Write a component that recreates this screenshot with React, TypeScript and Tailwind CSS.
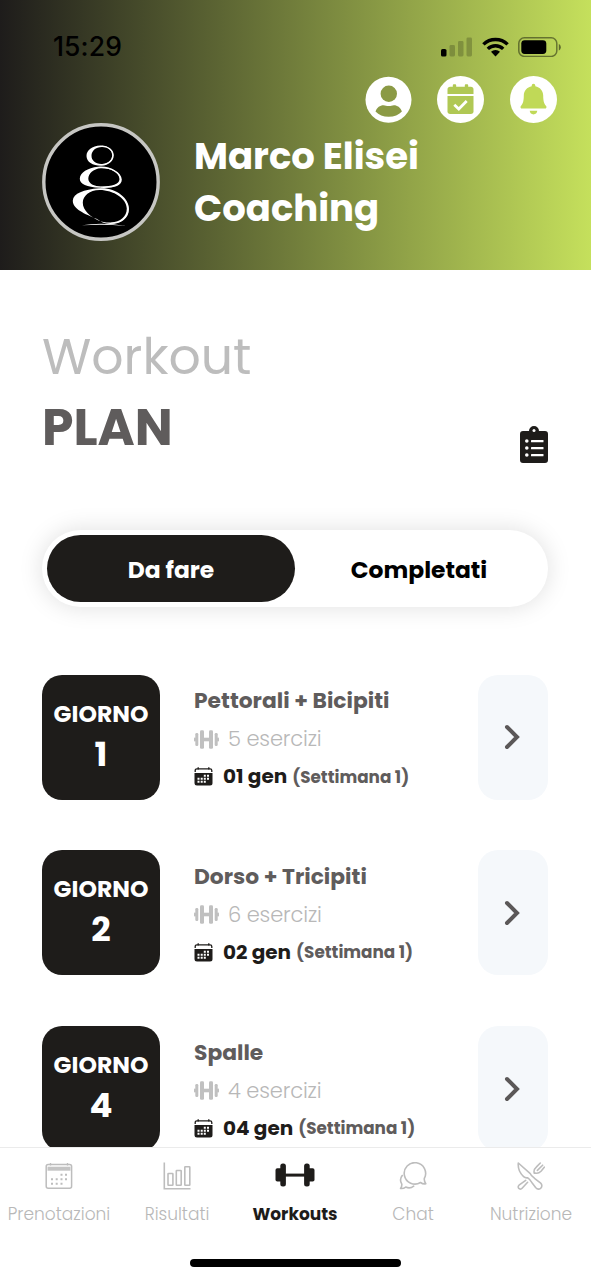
import { useState } from "react";

const workouts = [
  { day: 1, title: "Pettorali + Bicipiti", exercises: 5, date: "01 gen", week: "(Settimana 1)" },
  { day: 2, title: "Dorso + Tricipiti", exercises: 6, date: "02 gen", week: "(Settimana 1)" },
  { day: 4, title: "Spalle", exercises: 4, date: "04 gen", week: "(Settimana 1)" },
];

const navItems = [
  { label: "Prenotazioni", icon: CalendarOutlineIcon },
  { label: "Risultati", icon: ChartIcon },
  { label: "Workouts", icon: BarbellIcon },
  { label: "Chat", icon: ChatIcon },
  { label: "Nutrizione", icon: CutleryIcon },
];

function StatusBar() {
  return (
    <div className="flex h-[76px] items-center justify-between pt-[17px] pr-[30px] pl-[53px]">
      <span className="font-['Inter',sans-serif] text-[26.5px] font-medium tracking-[0.1px] text-black">15:29</span>
      <div className="flex items-center">
        <svg width="31" height="20" viewBox="0 0 31 20">
          <rect x="0" y="12" width="5.5" height="7.5" rx="1.6" fill="#000" />
          <g fill="#000" opacity="0.2">
            <rect x="8.5" y="8" width="5.5" height="11.5" rx="1.4" />
            <rect x="17" y="4" width="5.5" height="15.5" rx="1.4" />
            <rect x="25.5" y="0.5" width="5.5" height="19" rx="1.4" />
          </g>
        </svg>
        <svg className="ml-[10px]" width="27" height="20" viewBox="0 0 27 20">
          <g fill="none" stroke="#000" strokeWidth="3.4">
            <path d="M1.4 7.4A17.4 17.4 0 0 1 25.6 7.4" />
            <path d="M5.8 11.9A11.1 11.1 0 0 1 21.2 11.9" />
          </g>
          <path d="M9 14.8a6.6 6.6 0 0 1 9 0L13.5 19.6z" fill="#000" />
        </svg>
        <svg className="ml-[9px]" width="43" height="20" viewBox="0 0 43 20">
          <rect x="0.8" y="0.8" width="38" height="18.6" rx="5.5" fill="none" stroke="#000" strokeOpacity="0.45" strokeWidth="1.5" />
          <rect x="3.3" y="3.2" width="25" height="13.8" rx="3.4" fill="#000" />
          <path d="M40.8 7v6.4c1.2-.5 2-1.7 2-3.2s-.8-2.7-2-3.2z" fill="#000" opacity="0.5" />
        </svg>
      </div>
    </div>
  );
}

function HeaderIcons() {
  return (
    <div className="flex h-[47px] justify-end gap-[25.5px] pr-[34.5px]">
      <svg width="47" height="47" viewBox="0 0 47 47">
        <circle cx="23.5" cy="23.8" r="23" fill="#fff" />
        <circle cx="23.8" cy="17.8" r="8.2" fill="#8b9a45" />
        <path d="M10.5 35.5C12 31.5 15 29.3 18.5 29.3c2 0 2.8.8 5.2.8s3.2-.8 5.2-.8c3.500 0 6.500 2.200 8 6.200-3.300 3.400-7.700 5.300-13.200 5.300s-9.900-1.900-13.200-5.300z" fill="#8b9a45" />
      </svg>
      <svg width="47" height="47" viewBox="0 0 47 47">
        <circle cx="23.5" cy="23.5" r="23.5" fill="#fff" />
        <g fill="#b0c854">
          <path d="M10.5 18v-4.500c0-1.600 1-2.700 2.700-2.700h2.600V9.500c0-.8.5-1.300 1.200-1.300h1c.7 0 1.200.5 1.200 1.300v1.300h8.600V9.500c0-.8.5-1.300 1.200-1.300h1c.7 0 1.200.5 1.200 1.300v1.300h2.600c1.700 0 2.700 1.100 2.700 2.700V18z" />
          <path d="M10.5 19.900h26v15.300c0 1.700-1 2.800-2.700 2.800H13.200c-1.700 0-2.700-1.100-2.700-2.800z" />
        </g>
        <path d="M17.3 28.7l4.500 4.300 7.900-7.900" fill="none" stroke="#fff" strokeWidth="2.8" />
      </svg>
      <svg width="47" height="47" viewBox="0 0 47 47">
        <circle cx="23.5" cy="23.5" r="23.5" fill="#fff" />
        <g fill="#c0d957">
          <path d="M21.7 10.200V9.500a1.800 1.800 0 0 1 3.600 0v.7c4.600.9 7.900 4.600 7.900 9.300 0 6.500 1.300 8.600 2.900 10.400.9 1 .3 2.700-1.300 2.700H12.200c-1.600 0-2.200-1.700-1.300-2.700 1.600-1.800 2.900-3.900 2.900-10.400 0-4.700 3.300-8.400 7.900-9.300z" />
          <path d="M19.7 34.800h7.600c-.2 2.200-1.800 3.600-3.800 3.600s-3.600-1.400-3.800-3.600z" />
        </g>
      </svg>
    </div>
  );
}

function Logo() {
  return (
    <svg className="shrink-0" width="118" height="118" viewBox="0 0 118 118">
      <circle cx="59" cy="59" r="57.2" fill="#000" stroke="#c6c6c3" strokeWidth="3.4" />
      <path
        fillRule="evenodd"
        fill="#fff"
        d="M58.5 22.5C65.5 22 71.800 26.500 71.800 32C71.800 38 66.500 42.500 59.500 42.800C51 43 44.500 39 44.500 33C44.500 27 50 23 58.500 22.500ZM60 24C53.500 24 49.500 28 49.500 32.800C49.500 37.500 53.500 41.300 60 41C66.500 40.700 70.300 36.500 70.200 32C70.100 27.500 66 24 60 24ZM56 43.800C67 42.300 79.500 49 79.800 56.500C80 63 71 65.500 57.500 64.800C45 64 37.500 61.500 37.800 55.500C38.200 49.500 45.500 45 56 43.800ZM59 45.300C51 45.700 46.500 51 46.300 55.500C46.200 60.500 52 63.500 60 63.500C69.500 63.400 77.500 61.500 77.500 56C77.300 50 68.500 44.900 59 45.300ZM57 65.300C73 63.800 87 74.500 87 86C87 95 79 101 68.500 101C62 101 59 98.800 54.500 95.800C43 91 30.500 86 30.800 77.500C31.100 70.500 42 66.500 57 65.300ZM57.500 67C47.500 67 41 73 40.800 79.500C40.600 87.500 49 94 56.500 97.500C60.500 99.300 64.500 99.700 69 99.500C78.500 99 84.800 93.500 84.800 85.500C84.800 76 72 67 57.500 67Z"
      />
      <path
        fill="none"
        stroke="#fff"
        strokeWidth="0.8"
        d="M60 23.200a10.800 9.200 0 0 1 0 18.400M59 44.500c10 0 19.500 5 19.500 12s-9 7.700-19.500 7.700M58 66.200c15 0 28 9 28 19.500s-8 14.500-17 14.500"
      />
      <path d="M40 102.300Q60 98.800 84 103Q62 100.800 40 102.300Z" fill="#fff" />
    </svg>
  );
}

function ClipboardIcon() {
  return (
    <svg width="28" height="37" viewBox="0 0 28 37">
      <path fill="#1e1c1a" d="M9 5a5 5 0 0 1 10 0h6a3 3 0 0 1 3 3v26a3 3 0 0 1-3 3H3a3 3 0 0 1-3-3V8a3 3 0 0 1 3-3z" />
      <circle cx="14" cy="4.5" r="1.5" fill="#fff" />
      <g fill="#fff">
        <circle cx="6.8" cy="15" r="1.8" />
        <circle cx="6.8" cy="22" r="1.8" />
        <circle cx="6.8" cy="29" r="1.8" />
        <rect x="11" y="14" width="12.5" height="2.2" rx="0.5" />
        <rect x="11" y="21" width="12.5" height="2.2" rx="0.5" />
        <rect x="11" y="28" width="12.5" height="2.2" rx="0.5" />
      </g>
    </svg>
  );
}

function SmallBarbellIcon() {
  return (
    <svg width="25" height="19" viewBox="0 0 25 19" fill="#c0c0c0">
      <rect x="0" y="7.5" width="2" height="4" rx="0.8" />
      <rect x="1.3" y="3" width="3" height="13" rx="1.2" />
      <rect x="6" y="0.3" width="4" height="18.4" rx="1.3" />
      <rect x="9" y="7.7" width="7" height="3.6" />
      <rect x="15" y="0.3" width="4" height="18.4" rx="1.3" />
      <rect x="20.7" y="3" width="3" height="13" rx="1.2" />
      <rect x="23" y="7.5" width="2" height="4" rx="0.8" />
    </svg>
  );
}

function SmallCalendarIcon() {
  return (
    <svg width="19" height="19" viewBox="0 0 19 19">
      <path d="M0.500 6h18v10a2.500 2.500 0 0 1-2.500 2.500H3A2.500 2.500 0 0 1 .5 16z" fill="#1e1c1a" />
      <path d="M1.200 5V3.500c0-1 .7-1.700 1.700-1.700h13.200c1 0 1.700.7 1.700 1.700V5M4.200.3v2.500M14.800.3v2.500" fill="none" stroke="#1e1c1a" strokeWidth="1.3" />
      <path d="M9.800 8.800h2M13 8.800h2M3.500 11.800h2M6.700 11.800h2M9.800 11.800h2M13 11.800h2M3.500 14.800h2M6.700 14.800h2M9.800 14.800h2" stroke="#fff" strokeWidth="1.9" />
    </svg>
  );
}

function CalendarOutlineIcon() {
  return (
    <svg width="28" height="28" viewBox="0 0 28 28">
      <rect x="1.2" y="2.5" width="25.4" height="23.8" rx="2" fill="none" stroke="#bdbdbd" strokeWidth="1.5" />
      <path d="M2.500 4.700h23v4h-23z" fill="#c4c4c4" />
      <path d="M5.500 1v2.500M22.500 1v2.500" stroke="#bdbdbd" strokeWidth="1.3" />
      <path d="M15.500 12.800h2M20 12.800h2M6 17.300h2M10.700 17.300h2M15.500 17.300h2M20 17.300h2M6 21.800h2M10.700 21.800h2M15.500 21.800h2" stroke="#bdbdbd" strokeWidth="2" />
    </svg>
  );
}

function ChartIcon() {
  return (
    <svg width="28" height="28" viewBox="0 0 28 28" fill="none" stroke="#bdbdbd" strokeWidth="1.6">
      <path d="M1.300 0.500v26.300H27.500" />
      <rect x="5" y="11.5" width="4.9" height="11.7" rx="0.5" />
      <rect x="13.3" y="8.5" width="4.9" height="14.7" rx="0.5" />
      <rect x="21.8" y="4.8" width="5" height="18.4" rx="0.5" />
    </svg>
  );
}

function BarbellIcon() {
  return (
    <svg width="40" height="28" viewBox="0 0 40 28" fill="#1e1c1a">
      <rect x="9" y="11.6" width="22" height="3" />
      <rect x="0.5" y="6.3" width="7" height="13.3" rx="1.8" />
      <rect x="5.3" y="1.6" width="5.6" height="23" rx="2.5" />
      <rect x="29.1" y="1.6" width="5.6" height="23" rx="2.5" />
      <rect x="32.5" y="6.3" width="7" height="13.3" rx="1.8" />
    </svg>
  );
}

function ChatIcon() {
  return (
    <svg width="28" height="28" viewBox="0 0 28 28" fill="none" stroke="#bdbdbd" strokeWidth="1.6" strokeLinecap="round" strokeLinejoin="round">
      <path d="M25.300 16.500A10.700 10.700 0 1 0 21.500 20.500c1.700 1.200 3.600 1.600 5.300 1.200-1.200-1.600-1.700-3.400-1.500-5.200z" />
      <path d="M3.200 13.500c-1.900 2.500-2 6-.4 8.600.1 1.600-.2 3.200-1.200 4.300 1.800.2 3.600-.2 5.100-1.300 2.700 1.200 5.800.8 8-.9" />
    </svg>
  );
}

function CutleryIcon() {
  return (
    <svg width="28" height="28" viewBox="0 0 28 28" fill="none" stroke="#bdbdbd" strokeWidth="1.6" strokeLinecap="round" strokeLinejoin="round">
      <path d="M1.300 1c-.5 5.300 1.300 10 5.300 13.600 1.200 1.100 2.500 1.500 4.200 1.200 1.800 1.200 2.900 3 4.200 5l3.600 4.700c1.300 1.600 3.400 2 5 .9 1.700-1.400 1.600-3.800.1-5.200l-6.200-4.900c-1.700-1.300-3.700-2.800-4.500-5z" />
      <path d="M8.700 18.400L2 23.200c-1.300 1.300-.8 3 .4 3.600 1 .5 2 .2 2.700-.6l5.500-5.900" />
      <path d="M17.300 11.200c-.9-2.700.3-4.600 2.200-6.300L23.300 1M27.300 5.200l-3.300 4c-1.700 1.700-3.500 2.500-6 1.700M25.600 3.200l-5.200 5.200" />
    </svg>
  );
}

function WorkoutRow({ day, title, exercises, date, week }: (typeof workouts)[number]) {
  return (
    <div className="flex h-[125px] shrink-0">
      <div className="flex w-[118px] flex-col items-center justify-center rounded-[20px] bg-[#1e1c1a] pb-[7px] leading-10 font-bold text-white">
        <span className="text-[23.5px]">GIORNO</span>
        <span className="text-[34px]">{day}</span>
      </div>
      <div className="flex flex-1 flex-col justify-center pt-[3px] pl-[34px] leading-[38px] whitespace-nowrap">
        <h3 className="text-[21.8px] font-bold text-[#5f5c5c]">{title}</h3>
        <p className="flex items-center text-[21px] font-light tracking-[-0.15px] text-[#b8b8b8]">
          <SmallBarbellIcon />
          <span className="ml-[9px]">{exercises} esercizi</span>
        </p>
        <p className="flex h-[37px] items-center leading-[37px] font-bold">
          <SmallCalendarIcon />
          <span className="ml-[10px] text-[20px] text-[#1e1c1a]">{date}</span>
          <span className="ml-[5px] pt-px text-[16.8px] text-[#5f5c5c]">{week}</span>
        </p>
      </div>
      <button className="flex w-[70.5px] items-center justify-center rounded-[20px] bg-[#f5f8fb]">
        <svg width="18" height="26" viewBox="0 0 18 26" fill="none" stroke="#5b5858" strokeWidth="4" strokeLinecap="round">
          <path d="M3 3L13 13L3 23" />
        </svg>
      </button>
    </div>
  );
}

export default function App() {
  const [tab, setTab] = useState("Da fare");

  return (
    <div className="flex h-[1280px] w-full flex-col overflow-hidden bg-white font-['Poppins','Inter',sans-serif]">
      <header className="h-[270px] shrink-0 bg-linear-to-r/srgb from-[#1e1c1b] to-[#c5e05c]">
        <StatusBar />
        <HeaderIcons />
        <div className="flex items-center pl-[42px]">
          <Logo />
          <h1 className="ml-[34px] text-[37px] leading-[52px] font-bold text-white">
            Marco Elisei
            <br />
            Coaching
          </h1>
        </div>
      </header>

      <main className="min-h-0 flex-1 overflow-hidden pt-[51px] pr-[43px] pl-[42px]">
        <div className="flex items-end justify-between">
          <h2 className="text-[50.5px] leading-[71px]">
            <span className="block text-[#bdbdbd]">Workout</span>
            <span className="block font-bold text-[#5f5c5c]">PLAN</span>
          </h2>
          <ClipboardIcon />
        </div>

        <div className="mt-[67px] flex h-[77px] rounded-full bg-white p-[5px] shadow-[0_0_24px_rgba(0,0,0,0.13)]">
          {["Da fare", "Completati"].map((label) => (
            <button
              key={label}
              onClick={() => setTab(label)}
              className={`flex-1 rounded-full pt-0.5 text-[23.4px] font-bold ${
                tab === label ? "bg-[#1e1c1a] text-white" : "text-black"
              }`}
            >
              {label}
            </button>
          ))}
        </div>

        <div className="mt-[67.5px] flex flex-col gap-[50.75px]">
          {workouts.map((workout) => (
            <WorkoutRow key={workout.day} {...workout} />
          ))}
        </div>
      </main>

      <nav className="flex h-[133px] shrink-0 flex-col border-t border-[#ebebeb] bg-white">
        <div className="flex pt-[14px] pr-px">
          {navItems.map(({ label, icon: Icon }) => (
            <a
              key={label}
              href="#"
              className={`flex w-1/5 flex-col items-center text-[17px] leading-6 ${
                label === "Workouts" ? "font-bold text-[#1e1c1a]" : "font-light text-[#b8b8b8]"
              }`}
            >
              <Icon />
              <span className="mt-3">{label}</span>
            </a>
          ))}
        </div>
        <div className="mt-[33px] h-2 w-[211px] self-center rounded-full bg-black" />
      </nav>
    </div>
  );
}
